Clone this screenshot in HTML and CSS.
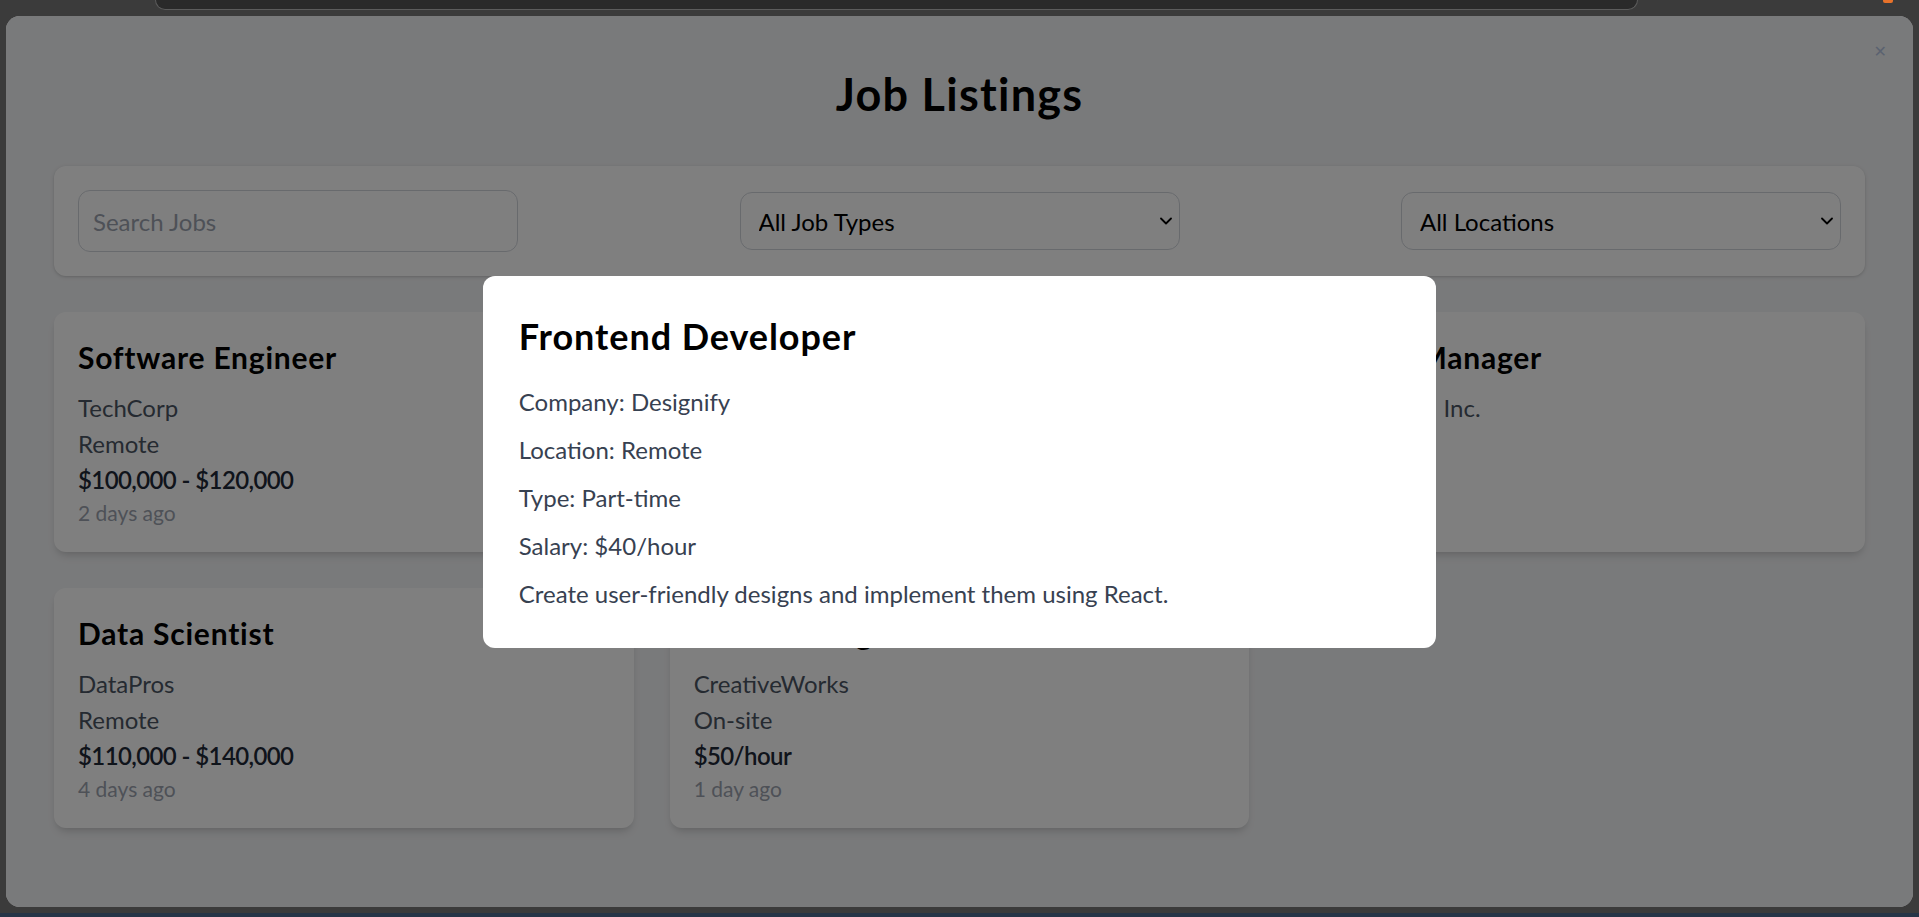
FILE: index.html
```html
<!DOCTYPE html>
<html lang="en">
<head>
<meta charset="utf-8">
<title>Job Listings</title>
<link rel="stylesheet" href="styles.css">
</head>
<body>
  <div class="topbar">
    <div class="tab"></div>
    <div class="orange"></div>
  </div>
  <div class="window">
    <main class="page">
      <h1 class="page-title">Job Listings</h1>
      <div class="filters">
        <input class="field search" type="text" placeholder="Search Jobs">
        <select class="field select">
          <option>All Job Types</option>
        </select>
        <select class="field select">
          <option>All Locations</option>
        </select>
      </div>
      <div class="grid">
        <div class="card">
          <h2 class="card-title">Software Engineer</h2>
          <p class="meta">TechCorp</p>
          <p class="meta">Remote</p>
          <p class="salary">$100,000 - $120,000</p>
          <p class="date">2 days ago</p>
        </div>
        <div class="card">
          <h2 class="card-title">Frontend Developer</h2>
          <p class="meta">Designify</p>
          <p class="meta">Remote</p>
          <p class="salary">$40/hour</p>
          <p class="date">3 days ago</p>
        </div>
        <div class="card">
          <h2 class="card-title">Project Manager</h2>
          <p class="meta">Enterprises Inc.</p>
          <p class="meta">Hybrid</p>
          <p class="salary">$90,000</p>
          <p class="date">1 week ago</p>
        </div>
        <div class="card">
          <h2 class="card-title">Data Scientist</h2>
          <p class="meta">DataPros</p>
          <p class="meta">Remote</p>
          <p class="salary">$110,000 - $140,000</p>
          <p class="date">4 days ago</p>
        </div>
        <div class="card">
          <h2 class="card-title">UI/UX Designer</h2>
          <p class="meta">CreativeWorks</p>
          <p class="meta">On-site</p>
          <p class="salary">$50/hour</p>
          <p class="date">1 day ago</p>
        </div>
      </div>
    </main>
    <div class="backdrop">
      <div class="modal">
        <h2 class="modal-title">Frontend Developer</h2>
        <p class="modal-line">Company: Designify</p>
        <p class="modal-line">Location: Remote</p>
        <p class="modal-line">Type: Part-time</p>
        <p class="modal-line">Salary: $40/hour</p>
        <p class="modal-line">Create user-friendly designs and implement them using React.</p>
      </div>
    </div>
    <button class="close" aria-label="Close">&#x2715;</button>
  </div>
  <div class="bottombar"></div>
</body>
</html>
```

FILE: styles.css
```css
* {
  box-sizing: border-box;
}

html, body {
  margin: 0;
  padding: 0;
}

body {
  background: #3b3b3b;
  font-family: Lato, "Noto Sans", "Liberation Sans", sans-serif;
  height: 917px;
  overflow: hidden;
  display: flex;
  flex-direction: column;
}

.topbar {
  height: 16px;
  display: flex;
  align-items: flex-start;
  padding-left: 155px;
}

.tab {
  width: 1483px;
  height: 10px;
  background: #2a2a2a;
  border: 1px solid #5c5c5c;
  border-top: none;
  border-radius: 0 0 10px 10px;
}

.orange {
  width: 10px;
  height: 3px;
  margin-left: 245px;
  background: #e8722a;
  border-radius: 0 0 2px 2px;
}

.window {
  position: relative;
  margin: 0 6px;
  height: 891px;
  background: #f3f4f6;
  border-radius: 14px;
  overflow: hidden;
}

.page {
  padding: 48px;
}

.page-title {
  margin: 0 0 45px;
  padding-top: 3px;
  font-size: 45px;
  line-height: 54px;
  font-weight: 700;
  letter-spacing: 0.028em;
  text-align: center;
  color: #000;
}

.filters {
  display: flex;
  justify-content: space-between;
  align-items: center;
  background: #fff;
  border-radius: 12px;
  padding: 24px;
  box-shadow: 0 1px 4px rgba(0, 0, 0, 0.12), 0 1px 2px rgba(0, 0, 0, 0.08);
  margin-bottom: 36px;
}

.field {
  width: 440px;
  border: 1.5px solid #d1d5db;
  border-radius: 12px;
  font-family: inherit;
  font-size: 24px;
  background-color: #fff;
  color: #000;
}

.search {
  height: 62px;
  padding: 0 14px;
}

.search::placeholder {
  color: #9ca3af;
}

.select {
  height: 58px;
  padding: 0 18px;
  appearance: none;
  -webkit-appearance: none;
  background-image: url("data:image/svg+xml,%3Csvg xmlns='http://www.w3.org/2000/svg' width='12' height='8' viewBox='0 0 12 8'%3E%3Cpath d='M1 1.5l5 5 5-5' fill='none' stroke='%23000' stroke-width='1.8' stroke-linecap='round' stroke-linejoin='round'/%3E%3C/svg%3E");
  background-repeat: no-repeat;
  background-position: right 7px center;
  background-size: 12px 8px;
}

.grid {
  display: grid;
  grid-template-columns: repeat(3, 1fr);
  gap: 36px;
}

.card {
  background: #fff;
  border-radius: 12px;
  padding: 24px;
  box-shadow: 0 6px 9px -2px rgba(0, 0, 0, 0.12), 0 3px 6px -3px rgba(0, 0, 0, 0.1);
}

.card-title {
  margin: 0 0 12px;
  font-size: 30px;
  line-height: 42px;
  font-weight: 700;
  letter-spacing: 0.026em;
  color: #000;
}

.meta {
  margin: 0;
  font-size: 24px;
  line-height: 36px;
  word-spacing: 10px;
  color: #4b5563;
}

.salary {
  margin: 0;
  font-size: 24px;
  line-height: 36px;
  font-weight: 600;
  letter-spacing: -0.6px;
  color: #1f2937;
}

.date {
  margin: 0;
  font-size: 21px;
  line-height: 30px;
  color: #9ca3af;
}

.backdrop {
  position: absolute;
  inset: 0;
  background: rgba(0, 0, 0, 0.5);
  display: flex;
  align-items: center;
  justify-content: center;
}

.modal {
  width: 50%;
  background: #fff;
  border-radius: 12px;
  padding: 36px;
}

.modal-title {
  margin: 0 0 24px;
  font-size: 36px;
  line-height: 48px;
  font-weight: 700;
  letter-spacing: 0.026em;
  color: #000;
}

.modal-line {
  margin: 0 0 12px;
  font-size: 24px;
  line-height: 36px;
  color: #374151;
}

.modal-line:last-child {
  margin-bottom: 0;
}

.close {
  position: absolute;
  top: 25px;
  right: 26px;
  background: none;
  border: none;
  padding: 0;
  font-family: "DejaVu Sans", sans-serif;
  font-size: 16px;
  line-height: 22px;
  color: #5b6270;
}

.bottombar {
  margin-top: 6px;
  height: 4px;
  background: #263547;
}
```
